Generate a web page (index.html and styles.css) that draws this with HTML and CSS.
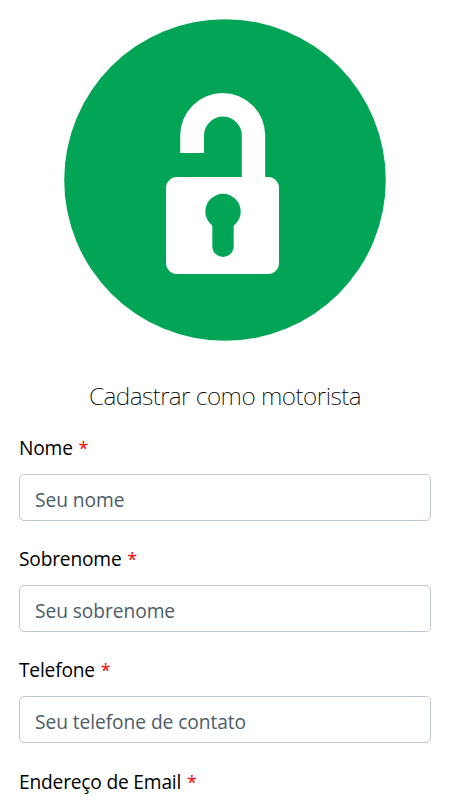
FILE: index.html
```html
<!DOCTYPE html>
<html lang="pt-br">
<head>
    <meta charset="UTF-8">
    <meta name="viewport" content="width=device-width, initial-scale=1.0">
    <title>Cadastrar como motorista</title>
    <link rel="stylesheet" href="styles.css">
</head>
<body>
    <main class="container">
        <svg class="logo" viewBox="0 0 322 322" aria-hidden="true">
            <circle cx="161" cy="161" r="160.8" fill="#02a556"/>
            <path fill="#fff" d="M116.2 134V116.5a42.5 42.5 0 0 1 85 0V158H204a11 11 0 0 1 11 11v75a11 11 0 0 1-11 11H113a11 11 0 0 1-11-11v-75a11 11 0 0 1 11-11h64.8V116.5a18.9 18.9 0 0 0-37.8 0V134z"/>
            <circle cx="159" cy="192.5" r="17.7" fill="#02a556"/>
            <rect x="148.3" y="192" width="21.4" height="46" rx="10.7" fill="#02a556"/>
        </svg>

        <h1>Cadastrar como motorista</h1>

        <form>
            <div class="campo">
                <label for="nome">Nome <span>*</span></label>
                <input type="text" id="nome" placeholder="Seu nome" required>
            </div>

            <div class="campo">
                <label for="sobrenome">Sobrenome <span>*</span></label>
                <input type="text" id="sobrenome" placeholder="Seu sobrenome" required>
            </div>

            <div class="campo">
                <label for="telefone">Telefone <span>*</span></label>
                <input type="tel" id="telefone" placeholder="Seu telefone de contato" required>
            </div>

            <div class="campo">
                <label for="email">Endereço de Email <span>*</span></label>
            </div>
        </form>
    </main>
</body>
</html>
```
FILE: styles.css
```css
* {
    box-sizing: border-box;
}

body {
    margin: 0;
    background-color: #fff;
    color: #000;
    font-family: 'Segoe UI', 'Open Sans', 'Noto Sans', sans-serif;
    font-size: 19.2px;
}

.container {
    height: 800px;
    padding: 19px 19px 0;
}

.logo {
    display: block;
    width: 322px;
    height: 322px;
    margin: 0 auto;
}

h1 {
    margin: 39px 0 22px;
    font-family: 'Segoe UI', 'Noto Sans', sans-serif;
    font-size: 24.5px;
    font-weight: 200;
    line-height: 32px;
    letter-spacing: -0.5px;
    text-align: center;
}

.campo {
    height: 111.2px;
}

.campo:last-child {
    height: 30px;
}

label {
    display: block;
    height: 40px;
    line-height: 28px;
    letter-spacing: -0.2px;
}

label span {
    margin-left: 1px;
    color: #f00;
    font-size: 18px;
}

input {
    display: block;
    width: 100%;
    height: 47px;
    padding: 3px 15px 0;
    border: 1px solid #bfc6d4;
    border-radius: 5px;
    background-color: #fff;
    font: inherit;
    letter-spacing: -0.07px;
}

input::placeholder {
    color: #4d5c69;
    opacity: 1;
}
```
